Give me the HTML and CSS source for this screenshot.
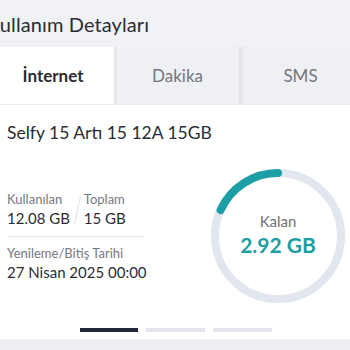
FILE: index.html
```html
<!DOCTYPE html>
<html lang="tr">
<head>
<meta charset="utf-8">
<link rel="stylesheet" href="styles.css">
</head>
<body>
<div class="page">
  <div class="header"><h1 class="title">Kullanım Detayları</h1></div>
  <div class="tabs">
    <div class="tab tab-active">İnternet</div>
    <div class="tab tab-mid">Dakika</div>
    <div class="tab tab-last">SMS</div>
  </div>
  <div class="card">
    <div class="package">Selfy 15 Artı 15 12A 15GB</div>
    <div class="body">
      <div class="info">
        <div class="pair">
          <div class="cell">
            <div class="label">Kullanılan</div>
            <div class="value">12.08 GB</div>
          </div>
          <div class="slash"></div>
          <div class="cell">
            <div class="label">Toplam</div>
            <div class="value">15 GB</div>
          </div>
        </div>
        <div class="divider"></div>
        <div class="cell">
          <div class="label">Yenileme/Bitiş Tarihi</div>
          <div class="value">27 Nisan 2025 00:00</div>
        </div>
      </div>
      <div class="gauge">
        <svg class="ring" width="134" height="134" viewBox="0 0 134 134">
          <circle cx="67" cy="67" r="63" fill="none" stroke="#e2e6ef" stroke-width="8"/>
          <circle cx="67" cy="67" r="63" fill="none" stroke="#1b9ea4" stroke-width="8" stroke-linecap="round" stroke-dasharray="72 400" transform="translate(0 134) scale(1 -1) rotate(90 67 67)"/>
        </svg>
        <div class="gauge-text">
          <div class="kalan">Kalan</div>
          <div class="remain">2.92 GB</div>
        </div>
      </div>
    </div>
    <div class="dots">
      <span class="dot dot-on"></span>
      <span class="dot"></span>
      <span class="dot"></span>
    </div>
  </div>
  <div class="footer"></div>
</div>
</body>
</html>
```

FILE: styles.css
```css
html, body {
  margin: 0;
  padding: 0;
}
body {
  background: #f1f2f6;
  font-family: Lato, "Open Sans", sans-serif;
  color: #2b2d33;
  width: 350px;
  height: 350px;
  overflow: hidden;
}
.page {
  display: flex;
  flex-direction: column;
}
.header {
  height: 47px;
  display: flex;
  align-items: center;
}
.title {
  margin: 0 0 0 -13px;
  font-size: 20px;
  font-weight: 400;
  color: #2b2d33;
  letter-spacing: 0.1px;
}
.tabs {
  display: flex;
  gap: 3px;
  height: 57px;
  margin: 0 -8px;
  background: #e4e6eb;
}
.tab {
  display: flex;
  align-items: center;
  justify-content: center;
  background: #eef0f4;
  font-size: 17px;
  color: #74777f;
}
.tab-active {
  width: 122px;
  background: #ffffff;
  color: #2b2d33;
  font-weight: 700;
}
.tab-mid {
  width: 121px;
  margin-right: 2px;
}
.tab-last {
  flex: 1;
}
.card {
  background: #ffffff;
  height: 235px;
  border-top: 1px solid #e9ebef;
  display: flex;
  flex-direction: column;
  box-sizing: border-box;
}
.package {
  font-size: 17.5px;
  padding: 16px 0 0 7px;
  line-height: 24px;
}
.body {
  display: flex;
  justify-content: space-between;
  padding: 0 5px 0 7px;
  margin-top: 24px;
}
.info {
  width: 138px;
  padding-top: 22px;
  white-space: nowrap;
}
.pair {
  display: flex;
  align-items: center;
  gap: 6px;
}
.slash {
  width: 1px;
  height: 28px;
  background: #dfe2e8;
  transform: rotate(12deg);
  margin: 0 0 0 1px;
}
.label {
  font-size: 13px;
  color: #767981;
  line-height: 17px;
}
.value {
  font-size: 15px;
  line-height: 20px;
  color: #2b2d33;
}
.divider {
  height: 1px;
  background: #e6e8ec;
  margin: 8px 0 8px;
}
.gauge {
  position: relative;
  width: 134px;
  height: 134px;
}
.ring {
  display: block;
}
.gauge-text {
  position: absolute;
  inset: 0;
  display: flex;
  flex-direction: column;
  align-items: center;
  justify-content: center;
  padding-bottom: 3px;
  box-sizing: border-box;
}
.kalan {
  font-size: 15px;
  color: #6f727a;
  line-height: 20px;
}
.remain {
  font-size: 21px;
  font-weight: 700;
  color: #1b9ea4;
  line-height: 27px;
}
.dots {
  display: flex;
  justify-content: center;
  gap: 8px;
  margin-top: auto;
  margin-bottom: 7px;
  padding-left: 2px;
}
.dot {
  width: 59px;
  height: 4px;
  background: #e3e6ee;
}
.dot-on {
  width: 58px;
  background: #23263a;
}
.footer {
  height: 11px;
  background: #eceef2;
}
```
